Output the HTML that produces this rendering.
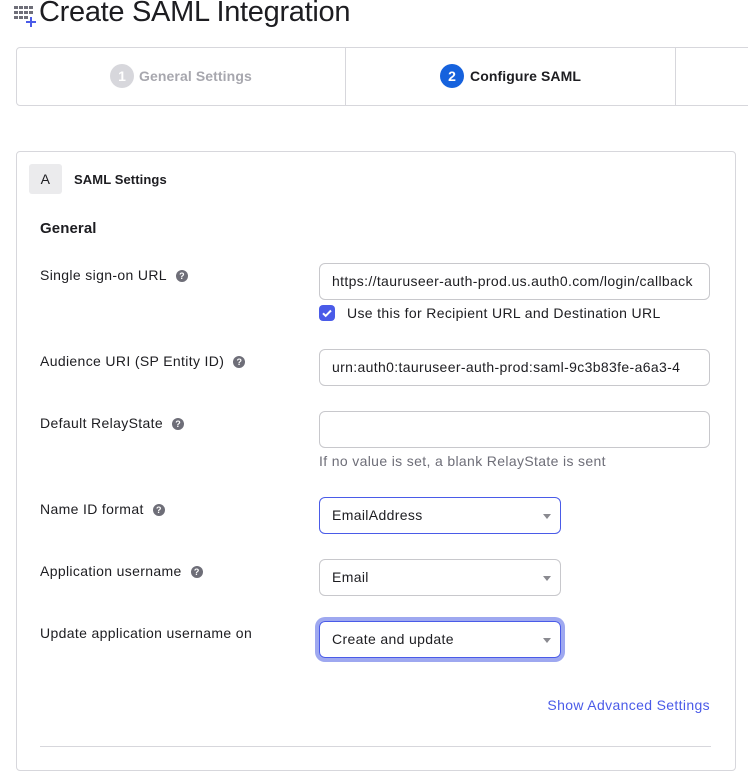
<!DOCTYPE html>
<html><head><style>
*{box-sizing:border-box;margin:0;padding:0}
body{width:748px;height:754px;overflow:hidden;background:#fff;font-family:"Liberation Sans",sans-serif;color:#1d1d21;position:relative;letter-spacing:0.35px}
.a{position:absolute}
.lbl{position:absolute;left:40px;font-size:14px;color:#1d1d21}
.q{display:inline-block;width:12px;height:12px;border-radius:50%;background:#6e6e78;color:#fff;font-size:9px;font-weight:bold;text-align:center;line-height:12px;margin-left:9px;vertical-align:1px;letter-spacing:0}
.in{position:absolute;left:319px;width:391px;height:37px;border:1px solid #c8c8cc;border-radius:6px;font-size:14px;line-height:35px;padding-left:12px;white-space:nowrap;overflow:hidden;color:#1d1d21}
.sel{width:242px}
.sel:after{content:"";position:absolute;right:9px;top:16px;border-left:4px solid transparent;border-right:4px solid transparent;border-top:5px solid #8a8a90}
b{letter-spacing:0.1px}
</style></head><body>
<svg class="a" style="left:14px;top:6px" width="26" height="22" viewBox="0 0 26 22">
<g fill="#6e6e78"><rect x="0" y="0" width="4" height="3"/><rect x="5" y="0" width="4" height="3"/><rect x="10" y="0" width="4" height="3"/><rect x="15" y="0" width="4" height="3"/>
<rect x="0" y="5" width="4" height="3"/><rect x="5" y="5" width="4" height="3"/><rect x="10" y="5" width="4" height="3"/><rect x="15" y="5" width="4" height="3"/>
<rect x="0" y="10" width="4" height="3"/><rect x="5" y="10" width="4" height="3"/><rect x="10" y="10" width="4" height="3"/></g>
<path d="M17 11v10M12 16h10" stroke="#4a5be8" stroke-width="2"/></svg>
<div class="a" style="left:39px;top:-4px;font-size:29px;letter-spacing:-0.3px">Create SAML Integration</div>
<div class="a" style="left:16px;top:47px;width:760px;height:59px;border:1px solid #d7d7dc;border-radius:4px"></div>
<div class="a" style="left:345px;top:48px;width:1px;height:57px;background:#d7d7dc"></div>
<div class="a" style="left:675px;top:48px;width:1px;height:57px;background:#d7d7dc"></div>
<div class="a" style="left:110px;top:64px;width:24px;height:24px;border-radius:50%;background:#d7d7dc;color:#fff;font-weight:bold;font-size:14px;text-align:center;line-height:24px;letter-spacing:0">1</div>
<div class="a" style="left:139px;top:68px;font-size:14px;font-weight:bold;color:#a7a7ae;letter-spacing:0.1px">General Settings</div>
<div class="a" style="left:440px;top:64px;width:24px;height:24px;border-radius:50%;background:#1662dd;color:#fff;font-weight:bold;font-size:14px;text-align:center;line-height:24px;letter-spacing:0">2</div>
<div class="a" style="left:470px;top:68px;font-size:14px;font-weight:bold;letter-spacing:0.1px">Configure SAML</div>
<div class="a" style="left:16px;top:151px;width:720px;height:620px;border:1px solid #d7d7dc;border-radius:4px"></div>
<div class="a" style="left:29px;top:164px;width:33px;height:30px;background:#ebebed;border-radius:3px;font-size:14px;text-align:center;line-height:30px">A</div>
<div class="a" style="left:74px;top:172px;font-size:13px;font-weight:bold;letter-spacing:0.1px">SAML Settings</div>
<div class="a" style="left:40px;top:220px;font-size:15px;font-weight:bold;letter-spacing:0.1px">General</div>
<div class="lbl" style="top:267px">Single sign-on URL<span class="q">?</span></div>
<div class="in" style="top:263px">https://tauruseer-auth-prod.us.auth0.com/login/callback</div>
<div class="a" style="left:319px;top:305px;width:16px;height:16px;border-radius:4px;background:#4a5be8"><svg width="16" height="16"><path d="M4 8.3l2.7 2.6L12 5.5" stroke="#fff" stroke-width="2" fill="none"/></svg></div>
<div class="a" style="left:347px;top:305px;font-size:14px">Use this for Recipient URL and Destination URL</div>
<div class="lbl" style="top:353px">Audience URI (SP Entity ID)<span class="q">?</span></div>
<div class="in" style="top:349px">urn:auth0:tauruseer-auth-prod:saml-9c3b83fe-a6a3-4</div>
<div class="lbl" style="top:415px">Default RelayState<span class="q">?</span></div>
<div class="in" style="top:411px"></div>
<div class="a" style="left:319px;top:453px;font-size:14px;color:#6e6e78">If no value is set, a blank RelayState is sent</div>
<div class="lbl" style="top:501px">Name ID format<span class="q">?</span></div>
<div class="in sel" style="top:497px;border-color:#4a5be8">EmailAddress</div>
<div class="lbl" style="top:563px">Application username<span class="q">?</span></div>
<div class="in sel" style="top:559px">Email</div>
<div class="lbl" style="top:625px">Update application username on</div>
<div class="in sel" style="top:621px;border-color:#4a5be8;box-shadow:0 0 0 4px #9ea8f0">Create and update</div>
<div class="a" style="right:38px;top:697px;font-size:14px;color:#4a5be8">Show Advanced Settings</div>
<div class="a" style="left:40px;top:746px;width:671px;height:1px;background:#d7d7dc"></div>
</body></html>
